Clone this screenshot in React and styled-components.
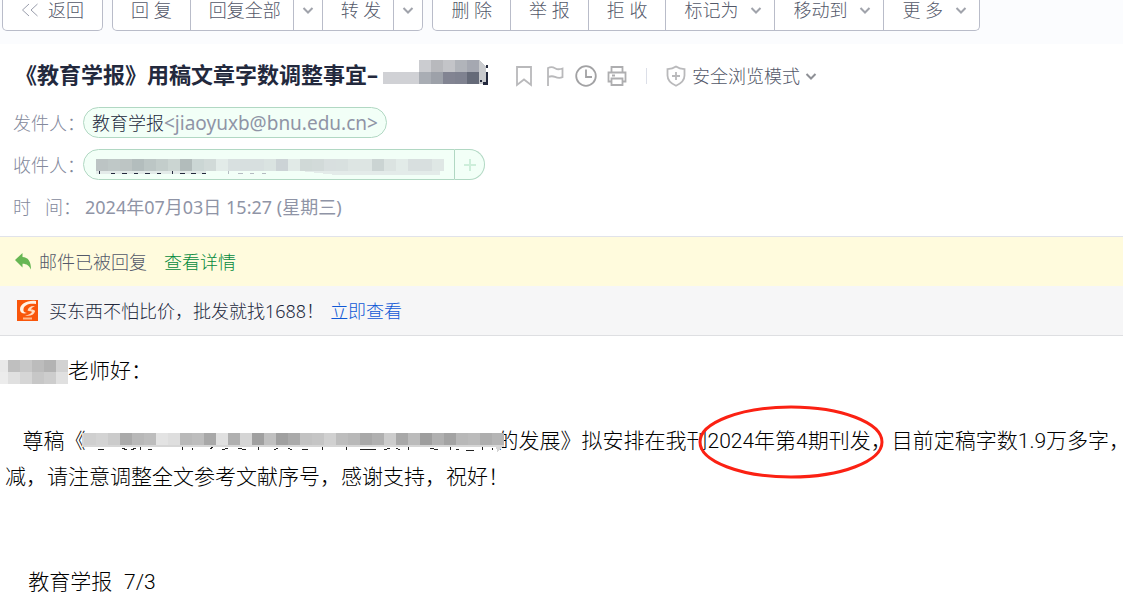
import React from 'react';
import styled, { createGlobalStyle, css } from 'styled-components';

const GlobalStyle = createGlobalStyle`
    * {
        box-sizing: border-box;
    }
    body {
        margin: 0;
        background: #fff;
        color: #535869;
        font-family: "Noto Sans", "Noto Sans CJK SC", sans-serif;
        font-size: 18px;
        line-height: 24px;
        overflow: hidden;
    }
    button {
        margin: 0;
        font: inherit;
        color: inherit;
        cursor: pointer;
    }
    a {
        text-decoration: none;
    }
    svg {
        display: block;
        flex: none;
    }
`;

const Page = styled.main`
    overflow: hidden;
`;

/* toolbar */

const Toolbar = styled.nav`
    display: flex;
    gap: 9px;
    height: 44px;
    padding: 0 2px;
    background: #fbfcfe;
    font-weight: 300;
    line-height: 20px;
    white-space: nowrap;
`;

const ButtonGroup = styled.div`
    display: flex;
    height: 31px;
    background: #fff;
    border: 1px solid #b9bcc9;
    border-top: 0;
    border-radius: 0 0 5px 5px;
`;

const ToolButton = styled.button`
    display: flex;
    align-items: center;
    gap: ${props => (props.$menu ? 12 : 9)}px;
    padding: 0 18px 10px;
    border: 0;
    background: none;

    & + & {
        border-left: 1px solid #b9bcc9;
    }

    ${props => (props.$menu || props.$split) && css`
        padding-right: 12px;
    `}
    ${props => props.$arrow && css`
        padding: 0 8px 10px;
    `}
`;

/* message header */

const Header = styled.header`
    padding: 14px 13px 14px;
    border-bottom: 1px solid #e1e3ea;
`;

const TitleRow = styled.div`
    display: flex;
    align-items: center;
    height: 36px;
    margin-bottom: 13px;
`;

const Title = styled.h1`
    display: flex;
    align-items: flex-start;
    gap: 5px;
    margin: 0;
    padding: 0 0 4px 2px;
    color: #23293d;
    font-size: 22px;
    font-weight: 700;
    line-height: 28px;
    white-space: nowrap;
`;

const Actions = styled.div`
    display: flex;
    align-items: center;
    gap: 9px;
    margin-left: 34px;
`;

const IconButton = styled.button`
    display: flex;
    padding: 0;
    border: 0;
    background: none;
`;

const Divider = styled.span`
    width: 1px;
    height: 16px;
    margin: 0 9px;
    background: #dcdfe8;
`;

const SafeMode = styled(IconButton)`
    align-items: center;
    gap: 5px;
    font-weight: 300;
    white-space: nowrap;
`;

const Fields = styled.dl`
    display: grid;
    grid-template-columns: 70px 1fr;
    row-gap: 11px;
    align-items: center;
    margin: 0;
    color: #84899c;
    font-weight: 300;
    white-space: nowrap;
`;

const Label = styled.dt``;

const Value = styled.dd`
    display: flex;
    align-items: center;
    height: 31px;
    margin: 0;

    ${props => props.$plain && css`
        padding-left: 2px;
        color: #8f94a6;
        font-weight: 400;
    `}
`;

const Pill = styled.span`
    display: flex;
    align-items: center;
    height: 31px;
    padding: 0 8px;
    background: #f2fff7;
    border: 1px solid #b1d8c3;
    border-radius: 16px;

    ${props => props.$open && css`
        padding: 0 10px 0 12px;
        border-radius: 16px 0 0 16px;
    `}
`;

const Name = styled.span`
    color: #23293d;
`;

const Address = styled.span`
    color: #8f94a6;
    font-size: 19px;
    font-weight: 400;
`;

const AddButton = styled.button`
    display: flex;
    align-items: center;
    justify-content: center;
    width: 30px;
    height: 31px;
    padding: 0;
    background: #f2fff7;
    border: 1px solid #b1d8c3;
    border-left: 0;
    border-radius: 0 16px 16px 0;
`;

/* notices */

const Notice = styled.div`
    display: flex;
    align-items: center;
    height: 49px;
    padding: 0 14px;
    font-weight: 300;
    white-space: nowrap;
    background: #fffbdd;
`;

const Promo = styled(Notice)`
    height: 50px;
    padding: 0 17px;
    color: #23293d;
    background: #f6f6f7;
    border-bottom: 1px solid #dedfe2;
`;

const NoticeText = styled.span`
    margin: 0 17px 0 7px;
`;

const PromoText = styled.span`
    margin: 0 6px 0 11px;
`;

const Link = styled.a`
    color: ${props => props.$color};
`;

/* message body */

const Body = styled.article`
    padding: 17px 0 0 5px;
    color: #000;
    font-family: "Liberation Sans", "Noto Sans CJK SC", sans-serif;
    font-size: 21px;
    font-weight: 300;
    line-height: 35px;
`;

const Line = styled.p`
    min-height: 35px;
    margin: 0;
    white-space: pre;
`;

const Num = styled.span`
    font-family: Roboto, "Liberation Sans", sans-serif;
`;

const Hidden = styled.span`
    position: relative;
    display: inline-block;
    width: ${props => props.$width}px;
    height: 24px;
    vertical-align: middle;

    svg {
        position: absolute;
        top: ${props => props.$top || 0}px;
        right: ${props => props.$over || 0}px;
    }
`;

const Circled = styled.span`
    position: relative;

    svg {
        position: absolute;
        top: -24px;
        left: -10px;
    }
`;

const CELL = 12;

const TITLE_CELLS = [
    [null, null, null, '#cbccd0', '#b8b9bd', '#c3c4c8', '#b1b4ba', '#a5a8b1'],
    ['#d0d1d5', '#d0d1d5', '#d0d1d5', '#a9adb4', '#9da1a9', '#828492', '#7f8290', '#656a78'],
];

const RECIPIENT_CELLS = [
    ['#bcc4c4', '#bfc8c7', '#bdc5c4', '#b3bdbd', '#bcc6c5', '#c3cdcb', '#cbd5d2', '#b2bcbb', '#cbd6d4', '#d1dad8',
        '#e2ebe8', '#d8e0e0', '#d7dfdf', '#d7dfdf', '#dae3e1', '#ccd3d6', '#e1eae7', '#d0d9d7', '#d2dad9', '#d8dfdf',
        '#d8e0df', '#dde5e3', '#dde5e3', '#cbd4d3', '#dbe3e1', '#e2ebe8', '#d8dfdf', '#d8dfdf', '#dfe7e5'],
];

const GREETING_CELLS = [
    ['#e9e9e9', '#bfbfbf', '#c8c8c8', '#bcbcbc', '#b3b3b3', '#d2d2d2'],
    ['#ececec', '#e0e0e0', '#d6d6d6', '#c7c7c7', '#cdcdcd', '#e0e0e0'],
];

const PAPER_CELLS = [
    ['#cfcfcf', '#d3d3d3', '#cbcbcb', '#aaaaaa', '#b8b8b8', '#bdbdbd', '#e3e3e3', '#dedede', '#b9b9b9', '#bdbdbd',
        '#a8a8a8', '#e0e0e0', '#b0b0b0', '#d5d5d5', '#a0a0a0', '#c0c0c0', '#a0a0a0', '#aaaaaa', '#c2c2c2', '#c5c5c5',
        '#d0d0d0', '#bdbdbd', '#b8b8b8', '#a8a8a8', '#b0b0b0', '#cccccc', '#a8a8a8', '#bbbbbb', '#9e9e9e', '#b0b0b0',
        '#a3a3a3', '#b8b8b8', '#bbbbbb', '#aeaeae', '#b5b5b5'],
];

function Mosaic({ rows, children }) {
    const width = Math.max(...rows.map(row => row.length)) * CELL;
    const height = rows.length * CELL;

    return (
        <svg width={width} height={height} overflow="visible" shapeRendering="crispEdges" aria-hidden="true">
            {children}
            {rows.map((row, y) => row.map((fill, x) => (
                fill && <rect key={`${x}-${y}`} x={x * CELL} y={y * CELL} width={CELL} height={CELL} fill={fill} />
            )))}
        </svg>
    );
}

function Chevron({ color = '#a0a3ab' }) {
    return (
        <svg width="12" height="12" viewBox="0 0 12 12" fill="none" stroke={color} strokeWidth="2" aria-hidden="true">
            <path d="M1.500 4L6 8.500L10.500 4" />
        </svg>
    );
}

const iconProps = {
    width: 22,
    height: 22,
    viewBox: '0 0 22 22',
    fill: 'none',
    stroke: '#b9b9bb',
    strokeWidth: 1.8,
    'aria-hidden': true,
};

function App() {
    return (
        <Page>
            <GlobalStyle />
            <Toolbar>
                <ButtonGroup>
                    <ToolButton>
                        <svg width="18" height="14" viewBox="0 0 18 14" fill="none" stroke="#9a9eac" aria-hidden="true">
                            <path d="M8 1L1.500 7L8 13M16.500 1L10 7l6.500 6" />
                        </svg>
                        返回
                    </ToolButton>
                </ButtonGroup>
                <ButtonGroup>
                    <ToolButton>回 复</ToolButton>
                    <ToolButton $split>回复全部</ToolButton>
                    <ToolButton $arrow aria-label="回复全部选项"><Chevron /></ToolButton>
                    <ToolButton $split>转 发</ToolButton>
                    <ToolButton $arrow aria-label="转发选项"><Chevron /></ToolButton>
                </ButtonGroup>
                <ButtonGroup>
                    <ToolButton>删 除</ToolButton>
                    <ToolButton>举 报</ToolButton>
                    <ToolButton>拒 收</ToolButton>
                    <ToolButton $menu>标记为 <Chevron /></ToolButton>
                    <ToolButton $menu>移动到 <Chevron /></ToolButton>
                    <ToolButton $menu>更 多 <Chevron /></ToolButton>
                </ButtonGroup>
            </Toolbar>

            <Header>
                <TitleRow>
                    <Title>
                        《教育学报》用稿文章字数调整事宜–
                        <Mosaic rows={TITLE_CELLS}>
                            <path d="M96 0l7 7v17h-7z" fill="#c8cacd" />
                            <path d="M103 5h2v3h-2zM103 12h2v13h-5v-3h3zM97 20h2v2h-2z" fill="#23293d" />
                        </Mosaic>
                    </Title>
                    <Actions>
                        <IconButton aria-label="书签">
                            <svg {...iconProps}>
                                <path d="M4 2h14v18l-7-5.500L4 20z" />
                            </svg>
                        </IconButton>
                        <IconButton aria-label="标记">
                            <svg {...iconProps}>
                                <path d="M4 21V3c3-1.500 5-1 7 .2s4 1.600 7.500 .3v8.700c-3 1.300-5 .8-7.500-.3s-4-1-7 .1" />
                            </svg>
                        </IconButton>
                        <IconButton aria-label="稍后处理">
                            <svg {...iconProps} stroke="#a2a2a4">
                                <circle cx="11" cy="11" r="9.800" />
                                <path d="M11 4.500v7.500h6" />
                            </svg>
                        </IconButton>
                        <IconButton aria-label="打印">
                            <svg {...iconProps} stroke="#aeaeb0">
                                <path d="M5.500 7V2h11v5M5.500 16.500h-3V7.500h17v9h-3M6 10.500h3" />
                                <path d="M5.500 13.500h11V20h-11z" />
                            </svg>
                        </IconButton>
                        <Divider />
                        <SafeMode>
                            <svg {...iconProps}>
                                <path d="M11 1.500c2.500 1.800 5 2.500 8.500 2.700v6.300c0 5-3.500 8-8.500 10.200-5-2.200-8.500-5.200-8.500-10.200V4.200C6 4 8.500 3.300 11 1.500z" />
                                <path d="M11 7v8M7 11h8" />
                            </svg>
                            安全浏览模式
                            <Chevron color="#8e9096" />
                        </SafeMode>
                    </Actions>
                </TitleRow>

                <Fields>
                    <Label>发件人：</Label>
                    <Value>
                        <Pill>
                            <Name>教育学报</Name>
                            <Address>&lt;jiaoyuxb@bnu.edu.cn&gt;</Address>
                        </Pill>
                    </Value>
                    <Label>收件人：</Label>
                    <Value>
                        <Pill $open>
                            <Mosaic rows={RECIPIENT_CELLS}>
                                <path d="M0 12h110v3H0zM204 12h140v4H240z" fill="#e3ebe9" />
                                <path
                                    d="M3 12v3M15 14h4M26 14h5M38 14h4M49 14h5M61 14h4M76 12v3M84 14h5M95 14h5M106 14h4"
                                    stroke="#23293d"
                                    strokeWidth="1"
                                />
                                <path d="M132 12v3M142 14h5M154 14h4M166 14h4" stroke="#b4bbc1" strokeWidth="1" />
                            </Mosaic>
                        </Pill>
                        <AddButton aria-label="添加联系人">
                            <svg width="12" height="12" viewBox="0 0 12 12" stroke="#cdeeda" strokeWidth="2" aria-hidden="true">
                                <path d="M6 0v12M0 6h12" />
                            </svg>
                        </AddButton>
                    </Value>
                    <Label>时&nbsp;&nbsp;&nbsp;间：</Label>
                    <Value $plain>2024年07月03日 15:27 (星期三)</Value>
                </Fields>
            </Header>

            <Notice>
                <svg width="18" height="18" viewBox="0 0 18 18" fill="#67b653" aria-hidden="true">
                    <path d="M1 7L8.500 0v4c5.500 .3 8.500 4 8.500 12.500C15 12.500 13 10.800 8.500 10.700v3.800z" />
                </svg>
                <NoticeText>邮件已被回复</NoticeText>
                <Link href="#detail" $color="#048a3e">查看详情</Link>
            </Notice>
            <Promo>
                <svg width="21" height="21" viewBox="0 0 21 21" aria-hidden="true">
                    <rect width="21" height="21" fill="#f9560b" />
                    <path d="M19 1C10 0 3 4 3 9.500c0 4 4 4.500 7 3.500-3-.5-4-1.500-3.500-4C7.200 5 12 3 19 4z" fill="#fff3e6" />
                    <path d="M18 6c-4-.5-6.500 1-7.500 4.500 2 .8 4 .5 4.500 1.500-1 2-3.500 3-7 3.500 5 1 9-.5 10-4 .3-1.500-2-2-4-2 .5-1.500 2-2.500 4-3.500z" fill="#ffdcc0" />
                    <path d="M6 18.500h9" stroke="#ffb78a" strokeWidth="2" />
                </svg>
                <PromoText>买东西不怕比价，批发就找1688！</PromoText>
                <Link href="#promo" $color="#0f58d6">立即查看</Link>
            </Promo>

            <Body>
                <Line>
                    <Hidden $width={63}>
                        <Mosaic rows={GREETING_CELLS} />
                    </Hidden>
                    老师好：
                </Line>
                <Line />
                <Line>
                    {'   尊稿《'}
                    <Hidden $width={412} $top={3} $over={-6}>
                        <Mosaic rows={PAPER_CELLS}>
                            <path d="M-2 0h2v14h-2zM0 12h420v2H0z" fill="#d6d6d6" />
                            <path d="M412 12h8l-7 8z" fill="#d6d6d6" />
                            <path
                                d="M14 16h6M38 15l5 2M47 17l5-2M56 14v3M64 16h4M98 14v3M108 15v2M126 16l3-2M138 17l6-2M154 15l8 2M174 14v3M190 17l4-2M204 15l4 2M218 16h6M238 14v3M262 14v3M276 16h16M300 17l6-2M312 15l4 2M324 14v3M346 15l8 2M366 14v3M372 16h3M382 17h8M398 14v3M408 15v2"
                                stroke="#222"
                                strokeWidth="1"
                            />
                        </Mosaic>
                    </Hidden>
                    的发展》拟安排在我刊
                    <Circled>
                        <Num>2024</Num>年第<Num>4</Num>期刊发，
                        <svg width="186" height="74" viewBox="0 0 186 74" fill="none" stroke="#fb2113" strokeWidth="3" aria-hidden="true">
                            <ellipse cx="93" cy="37" rx="91" ry="35" />
                        </svg>
                    </Circled>
                    目前定稿字数<Num>1.9</Num>万多字，
                </Line>
                <Line>减，请注意调整全文参考文献序号，感谢支持，祝好！</Line>
                <Line />
                <Line />
                <Line>{'    教育学报  '}<Num>7/3</Num></Line>
            </Body>
        </Page>
    );
}

export default App;
